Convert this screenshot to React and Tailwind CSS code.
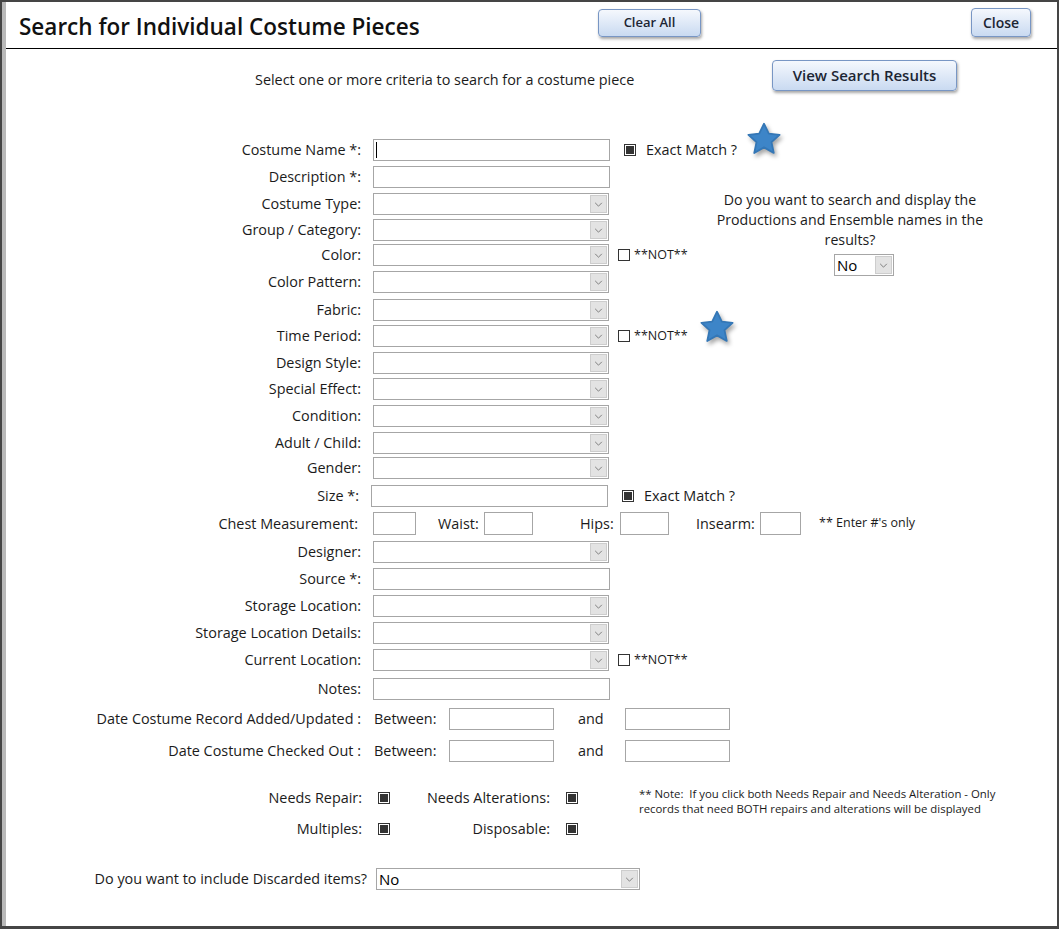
import React from 'react';

const font = { fontFamily: '"Open Sans", "Noto Sans", Arial, sans-serif' };

const rows = [
  { label: 'Costume Name *:', kind: 'text', gap: 'mt-0', extra: 'exact', caret: true },
  { label: 'Description *:', kind: 'text', gap: 'mt-[5px]' },
  { label: 'Costume Type:', kind: 'combo', gap: 'mt-[5px]' },
  { label: 'Group / Category:', kind: 'combo', gap: 'mt-[4px]' },
  { label: 'Color:', kind: 'combo', gap: 'mt-[3px]', extra: 'not' },
  { label: 'Color Pattern:', kind: 'combo', gap: 'mt-[5px]' },
  { label: 'Fabric:', kind: 'combo', gap: 'mt-[6px]' },
  { label: 'Time Period:', kind: 'combo', gap: 'mt-[4px]', extra: 'not' },
  { label: 'Design Style:', kind: 'combo', gap: 'mt-[5px]' },
  { label: 'Special Effect:', kind: 'combo', gap: 'mt-[4px]' },
  { label: 'Condition:', kind: 'combo', gap: 'mt-[5px]' },
  { label: 'Adult / Child:', kind: 'combo', gap: 'mt-[5px]' },
  { label: 'Gender:', kind: 'combo', gap: 'mt-[3px]' },
];

const lowerRows = [
  { label: 'Designer:', kind: 'combo', gap: 'mt-[6px]' },
  { label: 'Source *:', kind: 'text', gap: 'mt-[5px]' },
  { label: 'Storage Location:', kind: 'combo', gap: 'mt-[5px]' },
  { label: 'Storage Location Details:', kind: 'combo', gap: 'mt-[5px]' },
  { label: 'Current Location:', kind: 'combo', gap: 'mt-[5px]', extra: 'not' },
  { label: 'Notes:', kind: 'text', gap: 'mt-[7px]' },
];

function Chevron() {
  return (
    <svg viewBox="0 0 10 6" className="h-[5px] w-[9px]">
      <path d="M1 1l4 4 4-4" fill="none" stroke="#6b6b6b" strokeWidth="1" />
    </svg>
  );
}

function Combo({ width = 'w-[236px]', value }) {
  return (
    <div className={`flex h-[22px] shrink-0 ${width} items-center justify-between border border-[#a6a6a6] bg-white pl-[2px] pr-px`}>
      <span className="text-[15px] leading-none text-black">{value}</span>
      <div className="flex h-[18px] w-[17px] items-center justify-center border border-[#cdcdcd] bg-[#e3e3e3]">
        <Chevron />
      </div>
    </div>
  );
}

function TextBox({ width = 'w-[237px]', caret }) {
  return (
    <div className={`flex h-[22px] shrink-0 ${width} items-center border border-[#a6a6a6] bg-white pl-[2px]`}>
      {caret && <div className="h-[16px] w-px bg-black" />}
    </div>
  );
}

function CheckFilled() {
  return (
    <div className="flex h-[12px] w-[12px] shrink-0 items-center justify-center border border-[#333] bg-white">
      <div className="h-[8px] w-[8px] bg-[#333]" />
    </div>
  );
}

function CheckEmpty() {
  return <div className="h-[12px] w-[12px] shrink-0 border border-[#333] bg-white" />;
}

function Star({ className }) {
  return (
    <svg viewBox="0 0 24 24" className={`absolute drop-shadow-[2px_3px_2px_rgba(0,0,0,0.35)] ${className}`}>
      <polygon
        points="12,1.8 15.2,8.4 22.4,9.2 17,14.1 18.5,21.3 12,17.6 5.5,21.3 7,14.1 1.6,9.2 8.8,8.4"
        fill="#3d85c8"
        stroke="#3477b6"
        strokeWidth="1.2"
        strokeLinejoin="round"
      />
    </svg>
  );
}

function Row({ row }) {
  return (
    <div className={`flex h-[22px] items-center ${row.gap}`}>
      <span className="w-[355px] shrink-0 text-right text-[14.4px] text-[#1b1b1b]">{row.label}</span>
      <div className="ml-[12px] shrink-0">{row.kind === 'combo' ? <Combo /> : <TextBox caret={row.caret} />}</div>
      {row.extra === 'exact' && (
        <div className="ml-[14px] flex shrink-0 items-center whitespace-nowrap">
          <CheckFilled />
          <span className="ml-[10px] text-[14.4px] text-[#1b1b1b]">Exact Match ?</span>
        </div>
      )}
      {row.extra === 'not' && (
        <div className="ml-[9px] flex shrink-0 items-center whitespace-nowrap">
          <CheckEmpty />
          <span className="ml-[4px] text-[12.5px] text-[#1b1b1b]">**NOT**</span>
        </div>
      )}
    </div>
  );
}

function Button({ children, className }) {
  return (
    <button
      type="button"
      className={`shrink-0 rounded-[4px] border border-[#7896c4] bg-gradient-to-b from-[#f5f8fd] to-[#c9daf1] font-semibold text-[#1c2533] shadow-[1px_2px_3px_rgba(0,0,0,0.35)] ${className}`}
    >
      {children}
    </button>
  );
}

export default function App() {
  return (
    <div style={font} className="h-[929px] w-[1059px] overflow-hidden border-b-[3px] border-l-[2px] border-r-[2px] border-t-[2px] border-[#454545] bg-white">
      <div className="relative h-full border-l-[4px] border-[#b9b9b9]">
        <header className="flex h-[47px] items-start border-b border-black pt-[7px]">
          <div className="w-[592px] shrink-0 pl-[13px] pt-[3px]">
            <h1 className="text-[22.5px] font-semibold leading-[30px] text-[#111]">Search for Individual Costume Pieces</h1>
          </div>
          <Button className="h-[28px] w-[103px] text-[13px]">Clear All</Button>
          <Button className="-mt-px ml-[270px] h-[29px] w-[60px] text-[14px]">Close</Button>
        </header>

        <div className="mt-[11px] flex items-start">
          <span className="ml-[249px] mt-[9px] w-[517px] shrink-0 text-[14.4px] text-[#1b1b1b]">
            Select one or more criteria to search for a costume piece
          </span>
          <Button className="h-[31px] w-[185px] text-[15px]">View Search Results</Button>
        </div>

        <div className="mt-[48px] flex items-start">
          <div className="w-[706px] shrink-0">
            {rows.map((row) => (
              <Row key={row.label} row={row} />
            ))}
          </div>
          <div className="mt-[51px] flex w-[276px] shrink-0 flex-col items-center">
            <p className="text-center text-[14.2px] leading-[20px] text-[#1b1b1b]">
              Do you want to search and display the
              <br />
              Productions and Ensemble names in the
              <br />
              results?
            </p>
            <div className="ml-[28px] mt-[4px]">
              <Combo width="w-[60px]" value="No" />
            </div>
          </div>
        </div>

        <div className="mt-[6px] flex h-[22px] items-center">
          <span className="w-[353px] shrink-0 text-right text-[14.4px] text-[#1b1b1b]">Size *:</span>
          <div className="ml-[12px]">
            <TextBox />
          </div>
          <div className="ml-[14px] flex items-center">
            <CheckFilled />
            <span className="ml-[10px] text-[14.4px] text-[#1b1b1b]">Exact Match ?</span>
          </div>
        </div>

        <div className="mt-[5px] flex h-[23px] items-center text-[14.4px] text-[#1b1b1b]">
          <span className="w-[352px] shrink-0 text-right">Chest Measurement:</span>
          <div className="ml-[15px]">
            <TextBox width="w-[43px] h-[23px]" />
          </div>
          <span className="w-[68px] shrink-0 pl-[22px]">Waist:</span>
          <TextBox width="w-[49px] h-[23px]" />
          <span className="w-[87px] shrink-0 pl-[47px]">Hips:</span>
          <TextBox width="w-[49px] h-[23px]" />
          <span className="w-[91px] shrink-0 pl-[27px]">Insearm:</span>
          <TextBox width="w-[41px] h-[23px]" />
          <span className="ml-[18px] text-[12.5px]">** Enter #'s only</span>
        </div>

        {lowerRows.map((row) => (
          <Row key={row.label} row={row} />
        ))}

        {[
          { label: 'Date Costume Record Added/Updated :', gap: 'mt-[8px]' },
          { label: 'Date Costume Checked Out :', gap: 'mt-[10px]' },
        ].map((d) => (
          <div key={d.label} className={`flex h-[22px] items-center text-[14.4px] text-[#1b1b1b] ${d.gap}`}>
            <span className="w-[355px] shrink-0 text-right">{d.label}</span>
            <span className="ml-[13px] w-[75px] shrink-0">Between:</span>
            <TextBox width="w-[105px]" />
            <span className="w-[71px] shrink-0 pl-[24px]">and</span>
            <TextBox width="w-[105px]" />
          </div>
        ))}

        <div className="mt-[26px] flex items-start text-[14.4px] text-[#1b1b1b]">
          <div className="flex shrink-0 flex-col gap-[11px]">
            <div className="flex h-[20px] items-center">
              <span className="w-[356px] shrink-0 text-right">Needs Repair:</span>
              <div className="ml-[16px]">
                <CheckFilled />
              </div>
              <span className="w-[160px] shrink-0 text-right">Needs Alterations:</span>
              <div className="ml-[16px]">
                <CheckFilled />
              </div>
            </div>
            <div className="flex h-[20px] items-center">
              <span className="w-[356px] shrink-0 text-right">Multiples:</span>
              <div className="ml-[16px]">
                <CheckFilled />
              </div>
              <span className="w-[160px] shrink-0 text-right">Disposable:</span>
              <div className="ml-[16px]">
                <CheckFilled />
              </div>
            </div>
          </div>
          <p className="-mt-[2px] ml-[61px] text-[11.4px] leading-[15px]">
            ** Note:&nbsp; If you click both Needs Repair and Needs Alteration - Only
            <br />
            records that need BOTH repairs and alterations will be displayed
          </p>
        </div>

        <div className="mt-[29px] flex h-[22px] items-center">
          <span className="w-[361px] shrink-0 text-right text-[14.4px] text-[#1b1b1b]">Do you want to include Discarded items?</span>
          <div className="ml-[9px]">
            <Combo width="w-[264px]" value="No" />
          </div>
        </div>

        <Star className="left-[740px] top-[119px] h-[36px] w-[36px]" />
        <Star className="left-[693px] top-[307px] h-[36px] w-[36px]" />
      </div>
    </div>
  );
}
